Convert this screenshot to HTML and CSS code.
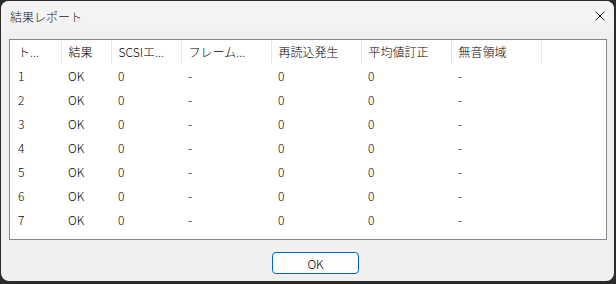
FILE: index.html
```html
<!DOCTYPE html>
<html lang="ja">
<head>
  <meta charset="UTF-8" />
  <title>結果レポート</title>
  <link rel="stylesheet" href="styles.css">
</head>
<body>
  <div class="window">
    <div class="titlebar">
      <span class="title">結果レポート</span>
      <svg class="close" width="10" height="10" viewBox="0 0 10 10">
        <path d="M0.5 0.5 L9.5 9.5 M9.5 0.5 L0.5 9.5" stroke="#1a1a1a" stroke-width="1" fill="none"/>
      </svg>
    </div>

    <div class="content">
      <div class="listview">
        <table class="report">
          <colgroup>
            <col style="width:51px"><col style="width:50px"><col style="width:70px">
            <col style="width:90px"><col style="width:90px"><col style="width:90px"><col style="width:90px">
          </colgroup>
          <thead>
            <tr>
              <th>ト...</th>
              <th>結果</th>
              <th>SCSIエ...</th>
              <th>フレーム...</th>
              <th>再読込発生</th>
              <th>平均値訂正</th>
              <th>無音領域</th>
            </tr>
          </thead>
          <tbody id="rows"></tbody>
        </table>
      </div>

      <div class="footer">
        <button class="ok">OK</button>
      </div>
    </div>
  </div>

  <script>
    const rows = document.getElementById('rows');
    for (let track = 1; track <= 7; track++) {
      const tr = document.createElement('tr');
      [track, 'OK', '0', '-', '0', '0', '-'].forEach(value => {
        const td = document.createElement('td');
        td.textContent = value;
        tr.appendChild(td);
      });
      rows.appendChild(tr);
    }
  </script>
</body>
</html>
```

FILE: styles.css
```css
body {
  margin: 0;
  padding: 1px 0 0 1px;
  background: #2b2b2b;
  font-family: "Noto Sans CJK JP", "Noto Sans", sans-serif;
  font-size: 12px;
  font-weight: 300;
  color: #000;
}

.window {
  width: 613px;
  height: 280px;
  background: #f0f0f0;
  border-radius: 8px;
  overflow: hidden;
  display: flex;
  flex-direction: column;
}

.titlebar {
  height: 30px;
  flex: none;
  background: #f3f3f3;
  display: flex;
  align-items: center;
  justify-content: space-between;
  padding: 0 9px 0 9px;
  color: #1a1a1a;
}

.title {
  padding-top: 1px;
}

.close {
  display: block;
}

.content {
  padding: 8px 7px 0 8px;
}

.listview {
  height: 199px;
  background: #fff;
  border: 1px solid #828790;
}

.report {
  border-collapse: collapse;
  table-layout: fixed;
  width: 531px;
}

.report th,
.report td {
  height: 24px;
  padding: 0 0 0 7px;
  text-align: left;
  font-weight: 300;
  white-space: nowrap;
  overflow: hidden;
  vertical-align: middle;
  line-height: 16px;
}

.report th:first-child,
.report td:first-child {
  padding-left: 8px;
}

.report th {
  border-right: 1px solid #e5e5e5;
}

.footer {
  display: flex;
  padding-left: 263px;
  margin-top: 12px;
}

.ok {
  width: 87px;
  height: 22px;
  background: #fdfdfd;
  border: 1px solid #0067c0;
  border-radius: 4px;
  font-family: "Noto Sans CJK JP", "Noto Sans", sans-serif;
  font-size: 12px;
  font-weight: 300;
  color: #000;
  padding: 0;
}
```
